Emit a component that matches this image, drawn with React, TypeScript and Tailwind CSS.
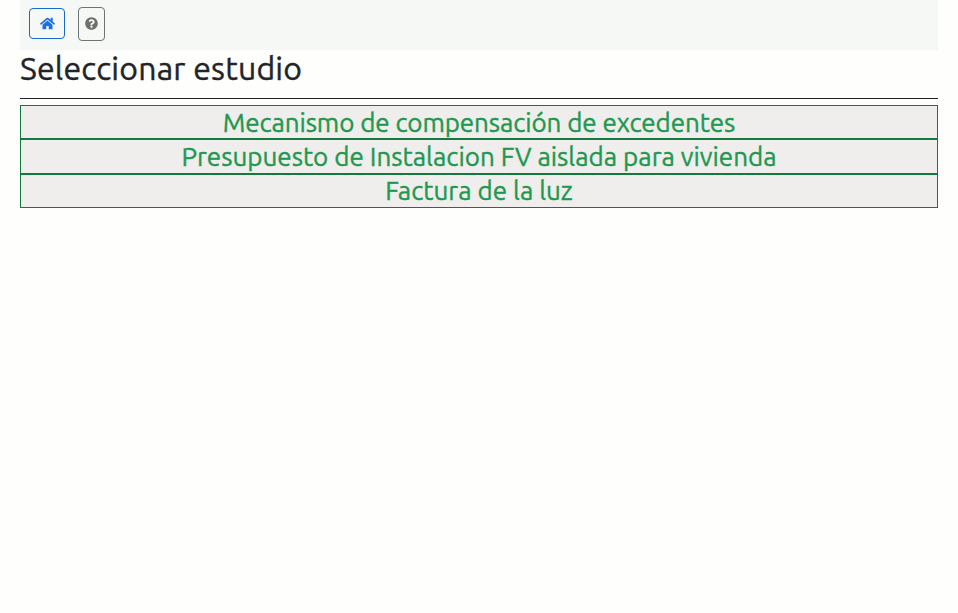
import React from "react";
import { FaHome, FaQuestionCircle } from "react-icons/fa";

const studies = [
  { name: "Mecanismo de compensación de excedentes", style: "tracking-[-0.1px]" },
  { name: "Presupuesto de Instalacion FV aislada para vivienda", style: "tracking-normal" },
  { name: "Factura de la luz", style: "tracking-normal" },
];

export default function App() {
  return (
    <main className="min-h-screen bg-[#fefefc] px-5 font-['Ubuntu','Noto_Sans',sans-serif] text-[#212529]">
      <nav className="flex h-[50px] items-start gap-[13px] bg-[#f5f8f5] pl-[9px] pt-[7px]">
        <button aria-label="Inicio" className="mt-px flex h-[31px] w-9 items-center justify-center rounded border border-[#1769cf] pb-px text-[#1b6fe8]">
          <FaHome size={15} />
        </button>
        <button aria-label="Ayuda" className="flex h-[34px] w-[27px] items-center justify-center rounded border border-[#6d7473] pb-[2px] text-[#6c706f]">
          <FaQuestionCircle size={13} />
        </button>
      </nav>
      <h1 className="h-[49px] border-b border-[#222] text-[32px] leading-[36px] tracking-[0.2px] [-webkit-text-stroke:0.4px]">Seleccionar estudio</h1>
      <div className="mt-[6px]">
        {studies.map(({ name, style }) => (
          <button key={name} className="flex h-[34.33px] w-full items-center justify-center border border-[#127a3e] bg-[#efeeed] pt-px text-[26px] leading-8 text-[#1f9851] [-webkit-text-stroke:0.4px]">
            <span className={`whitespace-nowrap ${style}`}>{name}</span>
          </button>
        ))}
      </div>
    </main>
  );
}
